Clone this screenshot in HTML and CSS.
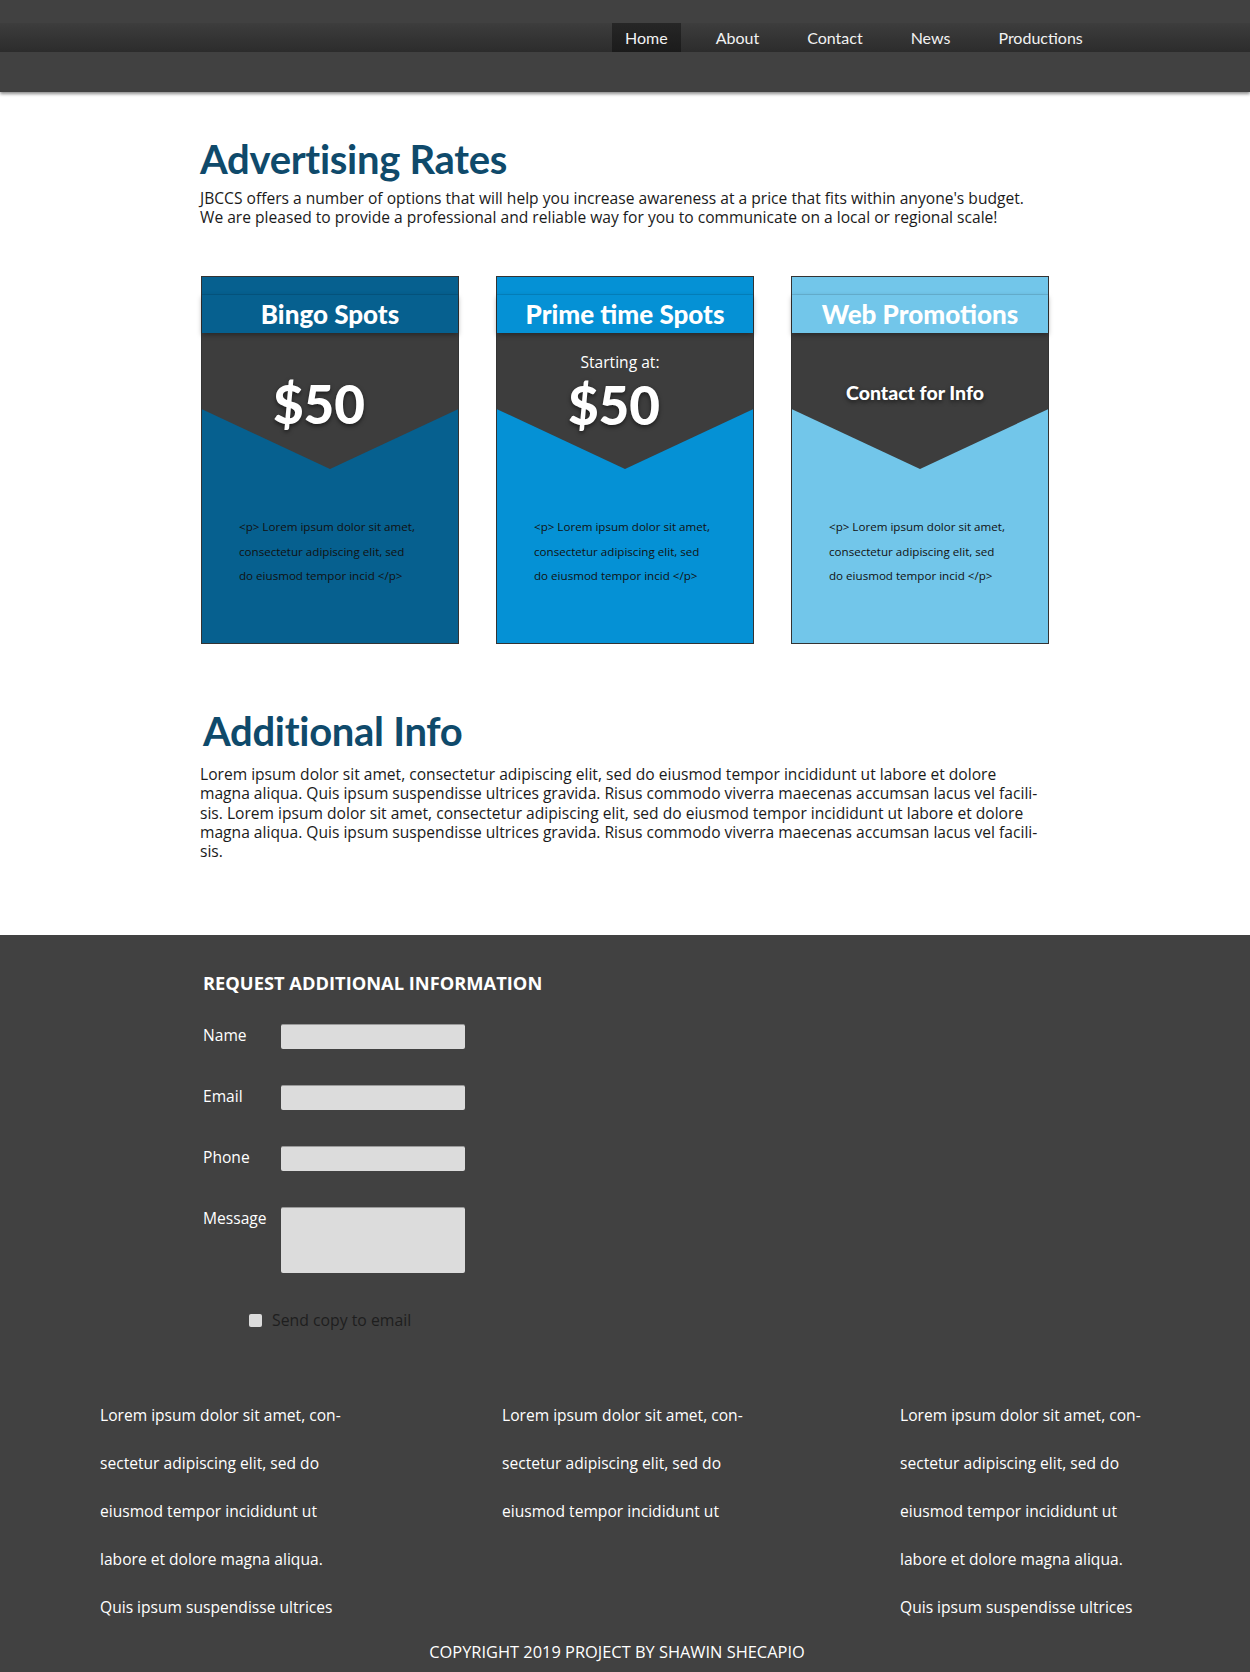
FILE: index.html
```html
<!DOCTYPE html>
<html>
<head>
<meta charset="utf-8">
<title>Advertising Rates</title>
<link rel="stylesheet" href="styles.css">
</head>
<body>
<header class="topbar">
  <nav class="navbar">
    <a class="nav-item active" href="#">Home</a>
    <a class="nav-item" href="#">About</a>
    <a class="nav-item" href="#">Contact</a>
    <a class="nav-item" href="#">News</a>
    <a class="nav-item" href="#">Productions</a>
  </nav>
</header>

<main class="content">
  <h1 class="title">Advertising Rates</h1>
  <p class="intro">JBCCS offers a number of options that will help you increase awareness at a price that fits within anyone's budget.<br>We are pleased to provide a professional and reliable way for you to communicate on a local or regional scale!</p>

  <div class="cards">
    <div class="card card-bingo">
      <div class="card-band">Bingo Spots</div>
      <div class="card-price">
        <div class="price price-solo">$50</div>
      </div>
      <p class="card-text">&lt;p&gt; Lorem ipsum dolor sit amet,<br>consectetur adipiscing elit, sed<br>do eiusmod tempor incid &lt;/p&gt;</p>
    </div>
    <div class="card card-prime">
      <div class="card-band">Prime time Spots</div>
      <div class="card-price">
        <div class="starting">Starting at:</div>
        <div class="price">$50</div>
      </div>
      <p class="card-text">&lt;p&gt; Lorem ipsum dolor sit amet,<br>consectetur adipiscing elit, sed<br>do eiusmod tempor incid &lt;/p&gt;</p>
    </div>
    <div class="card card-web">
      <div class="card-band">Web Promotions</div>
      <div class="card-price">
        <div class="contact-info">Contact for Info</div>
      </div>
      <p class="card-text">&lt;p&gt; Lorem ipsum dolor sit amet,<br>consectetur adipiscing elit, sed<br>do eiusmod tempor incid &lt;/p&gt;</p>
    </div>
  </div>

  <h2 class="title title-2">Additional Info</h2>
  <p class="body-text">Lorem ipsum dolor sit amet, consectetur adipiscing elit, sed do eiusmod tempor incididunt ut labore et dolore<br>magna aliqua. Quis ipsum suspendisse ultrices gravida. Risus commodo viverra maecenas accumsan lacus vel facili-<br>sis. Lorem ipsum dolor sit amet, consectetur adipiscing elit, sed do eiusmod tempor incididunt ut labore et dolore<br>magna aliqua. Quis ipsum suspendisse ultrices gravida. Risus commodo viverra maecenas accumsan lacus vel facili-<br>sis.</p>
</main>

<footer class="footer">
  <form class="form">
    <h3 class="form-title">REQUEST ADDITIONAL INFORMATION</h3>
    <div class="form-row"><label class="form-label">Name</label><input class="form-input" type="text"></div>
    <div class="form-row"><label class="form-label">Email</label><input class="form-input" type="text"></div>
    <div class="form-row"><label class="form-label">Phone</label><input class="form-input" type="text"></div>
    <div class="form-row"><label class="form-label">Message</label><textarea class="form-input form-area"></textarea></div>
    <div class="form-check"><span class="check-box"></span><span class="check-label">Send copy to email</span></div>
  </form>

  <div class="footer-cols">
    <p class="footer-col">Lorem ipsum dolor sit amet, con-<br>sectetur adipiscing elit, sed do<br>eiusmod tempor incididunt ut<br>labore et dolore magna aliqua.<br>Quis ipsum suspendisse ultrices</p>
    <p class="footer-col">Lorem ipsum dolor sit amet, con-<br>sectetur adipiscing elit, sed do<br>eiusmod tempor incididunt ut</p>
    <p class="footer-col">Lorem ipsum dolor sit amet, con-<br>sectetur adipiscing elit, sed do<br>eiusmod tempor incididunt ut<br>labore et dolore magna aliqua.<br>Quis ipsum suspendisse ultrices</p>
  </div>
  <p class="copyright">COPYRIGHT 2019 PROJECT BY SHAWIN SHECAPIO</p>
</footer>
</body>
</html>
```

FILE: styles.css
```css
* { box-sizing: border-box; }
html { margin: 0; padding: 0; background: #414141; }
body {
  margin: 0;
  padding: 0;
  width: 1250px;
  font-family: "Open Sans", "Liberation Sans", sans-serif;
  background: #ffffff;
  color: #1a1a1a;
}

.topbar {
  height: 92px;
  background: #414141;
  padding-top: 23px;
  box-shadow: 0 2px 3px rgba(0,0,0,0.45);
  position: relative;
  z-index: 2;
}
.navbar {
  height: 29px;
  display: flex;
  align-items: stretch;
  padding-left: 612px;
  gap: 22px;
  background: linear-gradient(#3d3d3d, #2c2c2c);
}
.nav-item {
  display: flex;
  align-items: center;
  padding: 0 13px;
  color: #f2f2f2;
  text-decoration: none;
  font-family: "Lato", "Liberation Sans", sans-serif;
  font-size: 16px;
}
.nav-item.active { background: linear-gradient(#262626, #1b1b1b); }

.content {
  width: 850px;
  margin: 0 auto;
  padding: 44px 0 74px;
}
.title {
  margin: 0;
  font-family: "Lato", "Liberation Sans", sans-serif;
  font-size: 40px;
  font-weight: 700;
  color: #0f4a6b;
  letter-spacing: -0.3px;
  line-height: 46px;
}
.intro {
  margin: 7px 0 0;
  font-size: 15.6px;
  line-height: 19px;
  color: #1a1a1a;
  white-space: nowrap;
}

.cards {
  display: flex;
  gap: 37px;
  margin-top: 49px;
  margin-left: 1px;
}
.card {
  width: 258px;
  height: 368px;
  border: 1px solid #333;
  padding-top: 18px;
}
.card-bingo { background: #06608f; }
.card-prime { background: #0591d5; }
.card-web { background: #72c6ea; }
.card-band {
  height: 38px;
  line-height: 38px;
  text-align: center;
  color: #fff;
  font-family: "Lato", "Liberation Sans", sans-serif;
  font-weight: 900;
  font-size: 26px;
  position: relative;
  z-index: 1;
  box-shadow: 0 2px 5px rgba(0,0,0,0.35), 0 -1px 0 rgba(0,0,0,0.08);
  background: inherit;
}
.card-price {
  height: 136px;
  background: #3d3d3d;
  clip-path: polygon(0 0, 100% 0, 100% 56%, 50% 100%, 0 56%);
  display: flex;
  flex-direction: column;
  align-items: center;
  color: #fff;
  padding-right: 22px;
}
.price {
  font-family: "Lato", "Liberation Sans", sans-serif;
  font-size: 53px;
  font-weight: 900;
  margin-top: 0;
  line-height: 64px;
  text-shadow: 0 2px 4px rgba(0,0,0,0.55);
}
.price-solo { margin-top: 39px; }
.starting {
  font-size: 15.6px;
  margin: 18px 0 0;
  line-height: 22px;
  padding-left: 12px;
}
.contact-info {
  font-family: "Lato", "Liberation Sans", sans-serif;
  font-size: 19.5px;
  font-weight: 900;
  margin-top: 48px;
  padding-left: 12px;
  text-shadow: 0 2px 4px rgba(0,0,0,0.55);
}
.card-text {
  margin: 46px 0 0 37px;
  font-size: 11.6px;
  line-height: 24.5px;
  color: #111;
}

.title-2 { margin-top: 64px; padding-left: 3px; }
.body-text {
  margin: 11px 0 0;
  font-size: 15.6px;
  line-height: 19.3px;
  color: #1a1a1a;
  white-space: nowrap;
}

.footer {
  background: #414141;
  padding: 35px 0 20px;
  color: #fff;
}
.form {
  margin-left: 203px;
}
.form-title {
  margin: 0 0 29px;
  font-size: 18.3px;
  font-weight: 700;
  color: #fff;
}
.form-row {
  display: flex;
  align-items: flex-start;
  margin-bottom: 36px;
}
.form-label {
  width: 78px;
  font-size: 15.6px;
  line-height: 22px;
  color: #fff;
}
.form-input {
  width: 184px;
  height: 25px;
  background: #dcdcdc;
  border: none;
  border-top: 1px solid #9a9a9a;
  border-radius: 2px;
  display: block;
  margin: 0;
}
.form-area { height: 66px; resize: none; }
.form-check {
  display: flex;
  align-items: center;
  margin-left: 46px;
  margin-top: 0;
  height: 22px;
}
.check-box {
  width: 13px;
  height: 13px;
  background: #dcdcdc;
  border-radius: 2px;
}
.check-label {
  margin-left: 10px;
  font-size: 15.8px;
  color: #1e1e1e;
}

.footer-cols {
  display: grid;
  grid-template-columns: 402px 398px 260px;
  margin: 60px 0 0 100px;
}
.footer-col {
  margin: 0;
  font-size: 15.6px;
  line-height: 48px;
  color: #fff;
}
.copyright {
  margin: 10px 0 0;
  text-align: center;
  font-size: 16.4px;
  line-height: 22px;
  color: #fff;
  padding-right: 16px;
}
```
